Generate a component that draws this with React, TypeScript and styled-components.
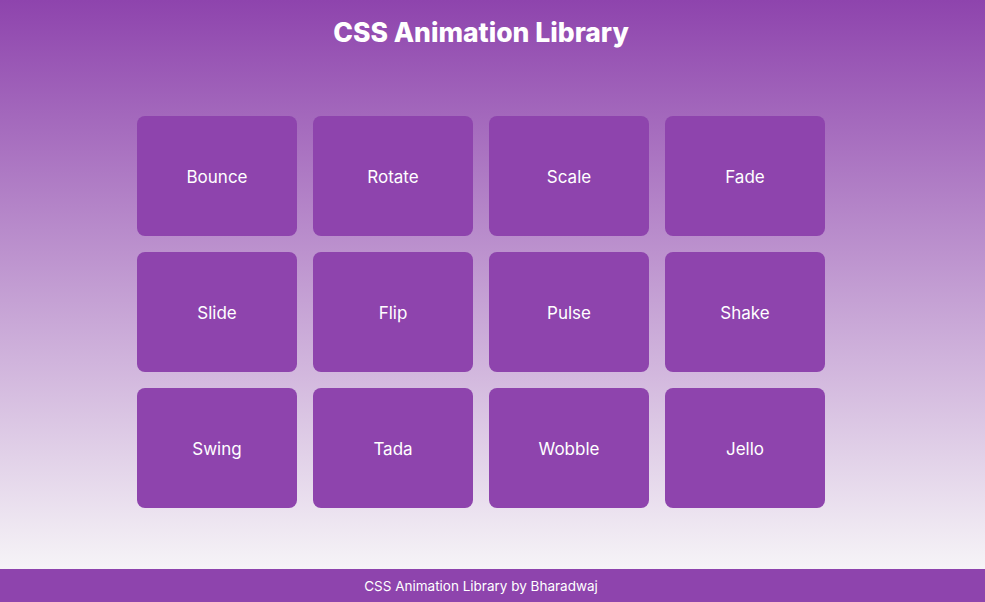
import React from "react";
import styled, { createGlobalStyle } from "styled-components";

const GlobalStyle = createGlobalStyle`
  html, body { margin: 0; padding: 0; }
  body {
    font-family: "Inter", "Open Sans", "Liberation Sans", sans-serif;
    background: #f4f4f4;
  }
`;

const Page = styled.div`
  display: flex;
  flex-direction: column;
  height: 602px;
`;

const Main = styled.main`
  flex: 1;
  display: flex;
  flex-direction: column;
  align-items: center;
  padding: 0 23px 0 0;
  background: linear-gradient(to bottom, #8e44ad 0%, #f6f4f7 100%);
`;

const Title = styled.h1`
  margin: 14px 0 0;
  height: 36px;
  line-height: 36px;
  font-size: 26.5px;
  font-weight: 800;
  color: #ffffff;
  letter-spacing: 0;
`;

const Grid = styled.div`
  margin-top: 66px;
  display: grid;
  grid-template-columns: repeat(4, 160px);
  grid-auto-rows: 120px;
  gap: 16px;
`;

const Card = styled.div`
  background: #8e44ad;
  border-radius: 8px;
  display: flex;
  align-items: center;
  justify-content: center;
  padding-top: 2px;
  box-sizing: border-box;
  color: #ffffff;
  font-size: 17px;
  font-weight: 400;
`;

const Footer = styled.footer`
  height: 33px;
  background: #8e44ad;
  color: #ffffff;
  font-size: 13.5px;
  display: flex;
  align-items: center;
  justify-content: center;
  padding-right: 23px;
`;

const items = [
  "Bounce", "Rotate", "Scale", "Fade",
  "Slide", "Flip", "Pulse", "Shake",
  "Swing", "Tada", "Wobble", "Jello",
];

export default function App() {
  return (
    <>
      <GlobalStyle />
      <Page>
        <Main>
          <Title>CSS Animation Library</Title>
          <Grid>
            {items.map((name) => (
              <Card key={name}>{name}</Card>
            ))}
          </Grid>
        </Main>
        <Footer>CSS Animation Library by Bharadwaj</Footer>
      </Page>
    </>
  );
}
